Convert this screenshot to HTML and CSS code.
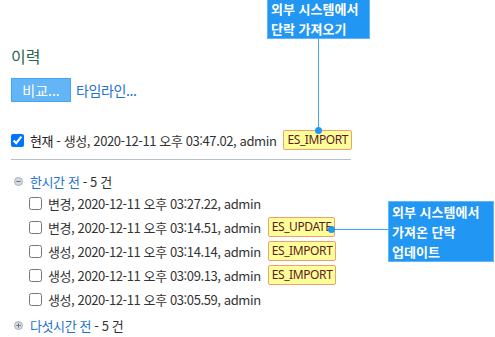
FILE: index.html
```html
<!DOCTYPE html>
<html lang="ko">

<head>
    <meta charset="UTF-8" />
    <meta name="viewport" content="width=device-width, initial-scale=1.0" />
    <title>이력</title>
    <link rel="stylesheet" href="styles.css">
</head>

<body>
    <div class="history">
        <h2 class="title">이력</h2>
        <div class="toolbar">
            <button class="compare">비교...</button>
            <a class="timeline" href="#">타임라인...</a>
        </div>

        <div class="row current">
            <input type="checkbox" checked>
            <span class="label"><span class="now">현재</span> - 생성, 2020-12-11 오후 03:47.02, admin</span>
            <span class="badge">ES_IMPORT</span>
        </div>
        <div class="separator"></div>

        <div class="group">
            <svg class="toggle" width="9" height="9" viewBox="0 0 9 9">
                <circle cx="4.5" cy="4.5" r="4" fill="#d5d9e0" stroke="#a9b0bc" />
                <line x1="2.3" y1="4.5" x2="6.7" y2="4.5" stroke="#6d7480" stroke-width="1" />
            </svg>
            <span class="label"><span class="group-name">한시간 전</span> - 5 건</span>
        </div>
        <div class="rows">
            <div class="row"><input type="checkbox"><span class="label">변경, 2020-12-11 오후 03:27.22, admin</span></div>
            <div class="row"><input type="checkbox"><span class="label">변경, 2020-12-11 오후 03:14.51, admin</span><span class="badge">ES_UPDATE</span></div>
            <div class="row"><input type="checkbox"><span class="label">생성, 2020-12-11 오후 03:14.14, admin</span><span class="badge">ES_IMPORT</span></div>
            <div class="row"><input type="checkbox"><span class="label">생성, 2020-12-11 오후 03:09.13, admin</span><span class="badge">ES_IMPORT</span></div>
            <div class="row"><input type="checkbox"><span class="label">생성, 2020-12-11 오후 03:05.59, admin</span></div>
        </div>

        <div class="group">
            <svg class="toggle" width="9" height="9" viewBox="0 0 9 9">
                <circle cx="4.5" cy="4.5" r="4" fill="#d5d9e0" stroke="#a9b0bc" />
                <line x1="2.3" y1="4.5" x2="6.7" y2="4.5" stroke="#6d7480" stroke-width="1" />
                <line x1="4.5" y1="2.3" x2="4.5" y2="6.7" stroke="#6d7480" stroke-width="1" />
            </svg>
            <span class="label"><span class="group-name">다섯시간 전</span> - 5 건</span>
        </div>
    </div>

    <!-- annotations -->
    <div class="callout callout-import">외부 시스템에서<br>단락 가져오기</div>
    <div class="leader leader-import"></div>
    <div class="dot dot-import"></div>

    <div class="callout callout-update">외부 시스템에서<br>가져온 단락<br>업데이트</div>
    <div class="leader leader-update"></div>
    <div class="dot dot-update"></div>
</body>

</html>
```

FILE: styles.css
```css
* {
    box-sizing: border-box;
}

body {
    margin: 0;
    font-family: "Noto Sans CJK KR", "Noto Sans", sans-serif;
    font-size: 13px;
    color: #333;
    background: #fff;
    width: 495px;
    height: 337px;
    overflow: hidden;
    position: relative;
}

.history {
    padding: 46px 0 0 11px;
}

.title {
    margin: 0;
    font-size: 16px;
    font-weight: normal;
    line-height: 20px;
    color: #2b6650;
}

.toolbar {
    margin-top: 12px;
    display: flex;
    align-items: center;
    height: 24px;
}

.compare {
    width: 60px;
    height: 24px;
    padding: 0;
    background: #64b5f6;
    border: 1px solid #42a5f5;
    color: #fff;
    font-family: inherit;
    font-size: 14px;
    cursor: pointer;
}

.timeline {
    margin-left: 5px;
    color: #1e73d2;
    text-decoration: none;
    font-size: 14px;
    letter-spacing: -0.4px;
}

.label {
    letter-spacing: -0.4px;
    white-space: nowrap;
}

.row {
    display: flex;
    align-items: center;
    height: 24px;
}

.row input {
    margin: 0 6px 0 0;
    width: 13px;
    height: 13px;
}

.current {
    margin-top: 28px;
    height: 20px;
}

.now {
    color: #222;
}

.badge {
    margin-left: 7px;
    height: 20px;
    line-height: 18px;
    padding: 0 3px;
    background: #ffff99;
    border: 1px solid #f0a070;
    border-radius: 2px;
    color: #5a1c24;
    font-family: "Noto Sans", sans-serif;
    font-size: 12px;
    letter-spacing: -0.4px;
}

.separator {
    margin-top: 9px;
    width: 340px;
    border-top: 1px solid #b4c0ca;
}

.group {
    margin-top: 11px;
    display: flex;
    align-items: center;
    height: 20px;
}

.rows + .group {
    margin-top: 4px;
}

.toggle {
    margin: 0 7px 0 3px;
}

.group-name {
    color: #1e73d2;
}

.rows {
    padding-left: 18px;
}

.callout {
    position: absolute;
    background: #2196f3;
    border: 1px solid #64b5f6;
    color: #fff;
    font-weight: bold;
    font-size: 13px;
    line-height: 20px;
    padding: 0 3px;
    white-space: nowrap;
}

.callout-import {
    left: 267px;
    top: -2px;
    width: 103px;
    height: 41px;
}

.callout-update {
    left: 388px;
    top: 201px;
    width: 106px;
    height: 61px;
}

.leader {
    position: absolute;
    background: #42a5f5;
}

.leader-import {
    left: 318px;
    top: 39px;
    width: 1px;
    height: 91px;
}

.leader-update {
    left: 331px;
    top: 229px;
    width: 57px;
    height: 1px;
}

.dot {
    position: absolute;
    width: 7px;
    height: 7px;
    border-radius: 50%;
    background: #2196f3;
}

.dot-import {
    left: 315px;
    top: 127px;
}

.dot-update {
    left: 328px;
    top: 226px;
}
```
